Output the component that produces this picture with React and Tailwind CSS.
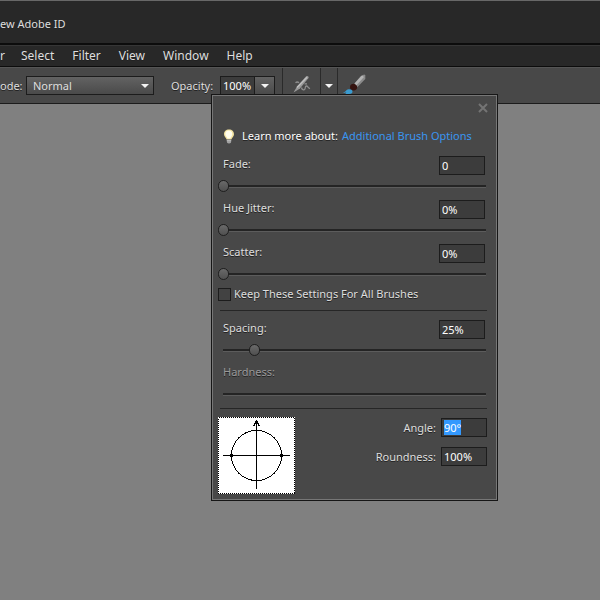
import { useEffect, useRef, useState } from 'react'

const menus = ['Select', 'Filter', 'View', 'Window', 'Help']

const fieldClass =
  'h-[19px] rounded-none border border-[#1c1c1c] bg-[#3c3c3c] px-[2px] text-[11px] text-white outline-none'

function Caret() {
  return (
    <svg width="8" height="4" viewBox="0 0 8 4" className="block" aria-hidden="true">
      <path d="M0 0h8L4 4z" fill="#f4f4f4" />
    </svg>
  )
}

function BulbIcon() {
  return (
    <svg width="12" height="15" viewBox="0 0 12 15" className="block" aria-hidden="true">
      <path d="M6 0.5C2.9 0.5 1 2.6 1 5.2c0 2.4 2 3.4 2.7 5.3h4.6C9 8.600 11 7.600 11 5.200 11 2.600 9.100 0.500 6 0.500z" fill="#f3e3a0" />
      <path d="M5.800 1.500C3.600 1.500 2.300 3 2.300 5c0 1.800 1.500 2.900 2.200 4.500h2.600C7.800 8 9.300 7 9.300 5c0-2-1.300-3.500-3.500-3.500z" fill="#fffdec" />
      <path d="M3.800 10.500h4.400v2.500L7 14.500H5L3.800 13z" fill="#8f8f8f" />
      <path d="M3.800 11.500h4.400M4 13h4" stroke="#c9c9c9" strokeWidth="0.700" />
    </svg>
  )
}

function AirbrushIcon() {
  return (
    <svg width="18" height="18" viewBox="0 0 18 18" className="block" aria-hidden="true">
      <path d="M0.500 17.500L4 11.500 13 1.500c1.400-1.300 3.500.2 2.300 1.800L7 13.500z" fill="#9a9a9a" />
      <path d="M4 12.500L14 2.200" stroke="#c0c0c0" strokeWidth="1.300" />
      <path d="M2.500 7.800c1-.9 2.500-.9 3.500 0M8.500 12.500c.4 2 1.500 2.800 2.800 2.200 1.700-.8.200-3.200 2-3.700 1.500-.3 1.300 1.700 3.700 2.700M11.500 8.800h2.500" fill="none" stroke="#8e8e8e" strokeWidth="1.300" />
    </svg>
  )
}

function BrushIcon() {
  return (
    <svg width="24" height="20" viewBox="0 0 24 20" className="block" aria-hidden="true">
      <path d="M11 10L17.500 2.500l3.500-2 1.300.5v4l-8.800 9z" fill="#8a8a8a" />
      <path d="M12.500 10.300L20 2.200" stroke="#b4b4b4" strokeWidth="2.600" />
      <path d="M7 13c0-2.500 3-3.800 5-2.800 2.300 1.100 3 3.300 1.500 5C11.800 17 7 17.500 7 13z" fill="#35130f" />
      <path d="M0 18.500c2.500-.3 3-3 5.500-3.300 2.200-.2 4 .6 4 2.300 0 1.500-1 2.500-3 2.500H2.500c0-.8.3-1.200 1-1.700-1.200.5-2.300.6-3.500.2z" fill="#3a9bd0" />
    </svg>
  )
}

function SettingSlider({ name, label, initial, suffix = '', disabled = false }) {
  const [value, setValue] = useState(initial)

  return (
    <div className="h-[44px]">
      <div className="flex h-5 items-start justify-between pr-px">
        <label
          htmlFor={name}
          className={disabled ? 'text-[#999]' : ''}
        >
          {label}:
        </label>
        {!disabled && (
          <input
            type="text"
            aria-label={label + ' value'}
            value={value + suffix}
            onChange={(e) => setValue(parseInt(e.target.value, 10) || 0)}
            className={fieldClass + ' w-[46px]'}
          />
        )}
      </div>
      <input
        id={name}
        type="range"
        min="0"
        max="205"
        disabled={disabled}
        value={value}
        onChange={(e) => setValue(Number(e.target.value))}
        className={
          'mt-1 block h-3 w-full appearance-none bg-transparent outline-none [&::-webkit-slider-runnable-track]:h-[2px] [&::-webkit-slider-runnable-track]:bg-[#242424] [&::-webkit-slider-runnable-track]:shadow-[0_1px_0_#5c5c5c] [&::-webkit-slider-thumb]:-mt-[5px] [&::-webkit-slider-thumb]:-ml-[5px] [&::-webkit-slider-thumb]:h-3 [&::-webkit-slider-thumb]:w-[11px] [&::-webkit-slider-thumb]:appearance-none [&::-webkit-slider-thumb]:rounded-full [&::-webkit-slider-thumb]:border [&::-webkit-slider-thumb]:border-[#1e1e1e] [&::-webkit-slider-thumb]:bg-linear-to-b [&::-webkit-slider-thumb]:from-[#6a6a6a] [&::-webkit-slider-thumb]:to-[#505050] ' +
          (disabled ? '[&::-webkit-slider-thumb]:opacity-0' : '')
        }
      />
    </div>
  )
}

function BrushAngle() {
  return (
    <svg width="77" height="77" viewBox="0 0 77 77" className="-ml-[5px] block shrink-0 bg-white" shapeRendering="crispEdges" role="img" aria-label="Brush angle">
      <rect x="0.500" y="0.500" width="76" height="76" fill="none" stroke="#000" strokeDasharray="1 1" />
      <circle cx="38.500" cy="38.500" r="25" fill="none" stroke="#000" />
      <path d="M38.500 3v69M5 38.500h67M38.500 3.500L35.500 9.500M38.500 3.500l3 6" fill="none" stroke="#000" />
      <path d="M12 37h3v3h-3zM62 37h3v3h-3z" fill="#000" />
    </svg>
  )
}

function BrushOptions() {
  const angleRef = useRef(null)
  const [keep, setKeep] = useState(false)

  useEffect(() => {
    angleRef.current.focus()
    angleRef.current.select()
  }, [])

  return (
    <section className="absolute top-[26px] left-[211px] z-10 w-[287px] border border-[#161616] bg-[#484848]">
      <div className="border border-[#767676] px-[10px] pb-[5px]">
        <div className="flex h-[30px] items-start justify-end pt-[6px]">
          <button type="button" aria-label="Close" className="-mr-[3px] p-px">
            <svg width="10" height="10" viewBox="0 0 10 10" className="block" aria-hidden="true">
              <path d="M1 1l8 8M9 1L1 9" stroke="#747474" strokeWidth="2" />
            </svg>
          </button>
        </div>

        <div className="mb-[10px] flex h-5 items-center">
          <BulbIcon />
          <p className="ml-[7px] flex gap-1 whitespace-nowrap text-white">
            <span>Learn more about:</span>
            <a href="#brush-options" className="text-[#3a96f0] [text-shadow:none]">Additional Brush Options</a>
          </p>
        </div>

        <SettingSlider name="fade" label="Fade" initial={0} />
        <SettingSlider name="hue" label="Hue Jitter" initial={0} suffix="%" />
        <SettingSlider name="scatter" label="Scatter" initial={0} suffix="%" />

        <label className="-ml-[5px] flex h-3 items-center gap-[3px] whitespace-nowrap">
          <input
            type="checkbox"
            checked={keep}
            onChange={(e) => setKeep(e.target.checked)}
            className="h-[13px] w-[13px] shrink-0 appearance-none border border-[#1c1c1c] bg-[#424242] checked:bg-[#999]"
          />
          Keep These Settings For All Brushes
        </label>

        <hr className="mt-[10px] mb-[9px] -ml-[3px] -mr-px border-[#262626]" />

        <SettingSlider name="spacing" label="Spacing" initial={25} suffix="%" />
        <SettingSlider name="hardness" label="Hardness" initial={0} disabled />

        <hr className="mb-2 -ml-[3px] -mr-px border-[#262626]" />

        <div className="flex items-start justify-between">
          <BrushAngle />
          <div className="-mr-px flex flex-col items-end gap-[10px] pt-px">
            <label className="flex items-center gap-[5px]">
              Angle:
              <input ref={angleRef} type="text" defaultValue="90°" className={fieldClass + ' w-[46px] selection:bg-[#3399ff] selection:text-white'} />
            </label>
            <label className="flex items-center gap-[5px]">
              Roundness:
              <input type="text" defaultValue="100%" className={fieldClass + ' w-[46px]'} />
            </label>
          </div>
        </div>
      </div>
    </section>
  )
}

export default function App() {
  return (
    <div className="flex min-h-screen flex-col overflow-hidden bg-[#808080] font-['Noto_Sans',sans-serif] text-[11px] leading-4 text-[#dedede] [text-shadow:0_1px_0_#222]">
      <header className="flex h-[45px] items-center border-t border-b-2 border-t-[#686868] border-b-[#0c0c0c] bg-[#282828] pt-[3px]">
        ew Adobe ID
      </header>

      <nav className="flex h-[22px] items-center gap-[18px] border-t border-b border-t-[#363636] border-b-[#0c0c0c] bg-[#282828] pb-px text-[12px]">
        <a href="#enhance" className="w-[3px]">r</a>
        {menus.map((m) => (
          <a key={m} href={'#' + m.toLowerCase()}>{m}</a>
        ))}
      </nav>

      <div className="relative flex h-[37px] items-center border-t border-b border-t-[#555] border-b-[#1c1c1c] bg-[#484848]">
        <label htmlFor="mode" className="w-[26px] whitespace-nowrap">ode:</label>
        <div className="relative">
          <select id="mode" className="block h-[19px] w-[128px] appearance-none border border-[#1c1c1c] bg-linear-to-b from-[#636363] to-[#4a4a4a] pl-[6px] text-[11px] text-[#dedede] outline-none">
            <option>Normal</option>
          </select>
          <span className="pointer-events-none absolute top-2 right-[5px]"><Caret /></span>
        </div>

        <label htmlFor="opacity" className="ml-[17px] w-[49px]">Opacity:</label>
        <input id="opacity" type="text" defaultValue="100%" className={fieldClass + ' w-[35px]'} />
        <button type="button" aria-label="Opacity slider" className="flex h-[19px] w-5 items-center justify-center border border-l-0 border-[#1c1c1c] bg-linear-to-b from-[#636363] to-[#4a4a4a]">
          <Caret />
        </button>

        <div className="ml-[7px] flex self-stretch">
          <button type="button" aria-label="Airbrush" className="flex w-[38px] items-center justify-center border-l border-[#2a2a2a] pb-[3px]">
            <AirbrushIcon />
          </button>
          <button type="button" aria-label="Airbrush options" className="flex w-[17px] items-center justify-center border-l border-[#2a2a2a]">
            <Caret />
          </button>
          <button type="button" aria-label="Brush" className="flex items-center border-l border-[#2a2a2a] pb-[3px] pl-[5px]">
            <BrushIcon />
          </button>
        </div>

        <BrushOptions />
      </div>

      <main className="flex-1 bg-[#808080]" />
    </div>
  )
}
